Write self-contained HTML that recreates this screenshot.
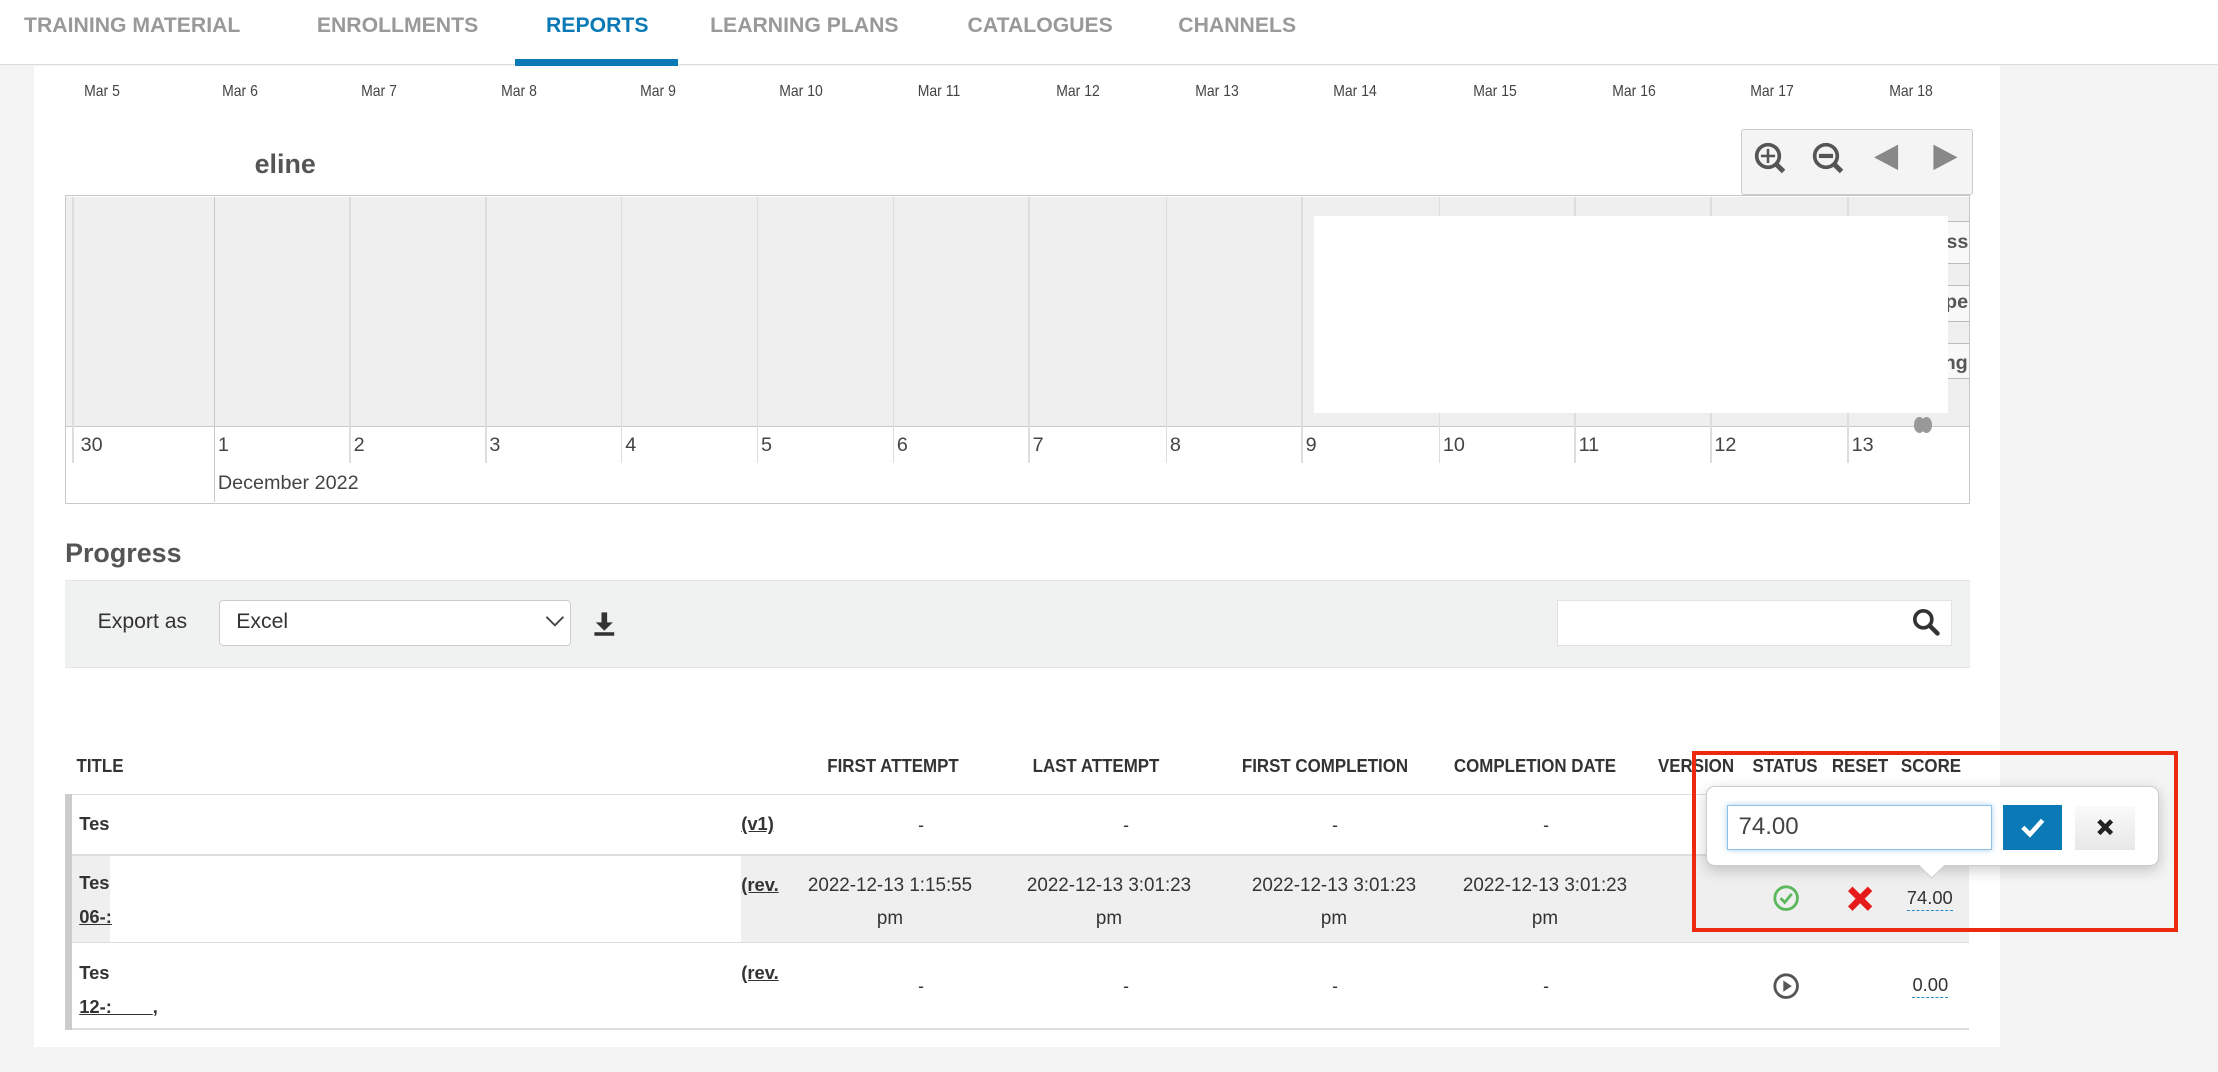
<!DOCTYPE html>
<html><head><meta charset="utf-8">
<style>
html,body{margin:0;padding:0;}
body{width:1568px;height:758px;zoom:1.41454;background:#f4f4f4;font-family:"Liberation Sans",sans-serif;color:#333;position:relative;overflow:hidden;}
.a{position:absolute;}
.nav{left:0;top:0;width:1568px;height:46px;background:#fff;border-bottom:1px solid #ddd;box-sizing:border-box;}
.tab{top:10px;font-size:15px;font-weight:bold;color:#999;letter-spacing:0;}
.mar{top:59px;font-size:11px;color:#444;transform:translateX(-50%) scaleX(0.9);}
.vl{width:1px;background:#ddd;}
.day{top:307px;font-size:14px;color:#444;}
.th{top:534px;font-size:13px;font-weight:bold;color:#333;transform:translateX(-50%) scaleX(0.92);white-space:nowrap;}
.td{font-size:13px;color:#333;text-align:center;transform:translateX(-50%) scaleX(0.95);white-space:nowrap;line-height:22px;}
.b{font-weight:bold;font-size:13px;}
u{text-decoration:underline;}
</style></head><body>
<div class="a nav"></div>
<div class="a tab" style="left:17px">TRAINING MATERIAL</div>
<div class="a tab" style="left:224px">ENROLLMENTS</div>
<div class="a tab" style="left:386px;color:#0a79b5">REPORTS</div>
<div class="a" style="left:364px;top:42px;width:115px;height:5px;background:#0a79b5"></div>
<div class="a tab" style="left:502px">LEARNING PLANS</div>
<div class="a tab" style="left:684px">CATALOGUES</div>
<div class="a tab" style="left:833px">CHANNELS</div>

<div class="a" style="left:24px;top:47px;width:1390px;height:693px;background:#fff"></div>

<div class="a mar" style="left:72px">Mar 5</div>
<div class="a mar" style="left:170px">Mar 6</div>
<div class="a mar" style="left:268px">Mar 7</div>
<div class="a mar" style="left:367px">Mar 8</div>
<div class="a mar" style="left:465px">Mar 9</div>
<div class="a mar" style="left:566px">Mar 10</div>
<div class="a mar" style="left:664px">Mar 11</div>
<div class="a mar" style="left:762px">Mar 12</div>
<div class="a mar" style="left:860px">Mar 13</div>
<div class="a mar" style="left:958px">Mar 14</div>
<div class="a mar" style="left:1057px">Mar 15</div>
<div class="a mar" style="left:1155px">Mar 16</div>
<div class="a mar" style="left:1253px">Mar 17</div>
<div class="a mar" style="left:1351px">Mar 18</div>

<div class="a" style="left:180px;top:105px;font-size:19px;font-weight:bold;color:#555">eline</div>

<div class="a" style="left:1231px;top:91px;width:164px;height:47px;background:#f4f4f4;border:1px solid #ccc;border-radius:2px;box-sizing:border-box"></div>
<svg class="a" style="left:1238px;top:98px" width="150" height="30" viewBox="0 0 150 30">
<g fill="none" stroke="#555" stroke-width="2.6"><circle cx="12" cy="12" r="8"/><line x1="18" y1="18" x2="23" y2="23" stroke-width="3.5"/>
<circle cx="53" cy="12" r="8"/><line x1="59" y1="18" x2="64" y2="23" stroke-width="3.5"/></g>
<g stroke="#555" stroke-width="1.8"><line x1="12" y1="7" x2="12" y2="17"/><line x1="7" y1="12" x2="17" y2="12"/><line x1="48" y1="12" x2="58" y2="12" stroke-width="3"/></g>
<polygon points="87,13 104,4 104,22" fill="#888"/>
<polygon points="146,13 129,4 129,22" fill="#888"/>
</svg>

<div class="a" style="left:46px;top:138px;width:1347px;height:218px;border:1px solid #c8c8c8;box-sizing:border-box;background:#fff"></div>
<div class="a" style="left:47px;top:139px;width:1345px;height:162px;background:#efefef;border-bottom:1px solid #c8c8c8"></div>
<div class="a vl" style="left:51px;top:139px;height:188px"></div>
<div class="a" style="left:151px;top:139px;width:1px;height:216px;background:#c8c8c8"></div>
<div class="a vl" style="left:247px;top:139px;height:188px"></div>
<div class="a vl" style="left:343px;top:139px;height:188px"></div>
<div class="a vl" style="left:439px;top:139px;height:188px"></div>
<div class="a vl" style="left:535px;top:139px;height:188px"></div>
<div class="a vl" style="left:631px;top:139px;height:188px"></div>
<div class="a vl" style="left:727px;top:139px;height:188px"></div>
<div class="a vl" style="left:824px;top:139px;height:188px"></div>
<div class="a vl" style="left:920px;top:139px;height:188px"></div>
<div class="a vl" style="left:1017px;top:139px;height:188px"></div>
<div class="a vl" style="left:1113px;top:139px;height:188px"></div>
<div class="a vl" style="left:1209px;top:139px;height:188px"></div>
<div class="a vl" style="left:1306px;top:139px;height:188px"></div>
<div class="a day" style="left:57px">30</div>
<div class="a day" style="left:154px">1</div>
<div class="a day" style="left:250px">2</div>
<div class="a day" style="left:346px">3</div>
<div class="a day" style="left:442px">4</div>
<div class="a day" style="left:538px">5</div>
<div class="a day" style="left:634px">6</div>
<div class="a day" style="left:730px">7</div>
<div class="a day" style="left:827px">8</div>
<div class="a day" style="left:923px">9</div>
<div class="a day" style="left:1020px">10</div>
<div class="a day" style="left:1116px">11</div>
<div class="a day" style="left:1212px">12</div>
<div class="a day" style="left:1309px">13</div>
<div class="a" style="left:154px;top:334px;font-size:14px;color:#444">December 2022</div>

<div class="a" style="left:1376px;top:156px;width:16px;height:90px;background:#f8f8f8;border-top:1px solid #bbb"></div>
<div class="a" style="left:1376px;top:186px;width:16px;height:15px;background:#efefef;border-top:1px solid #bbb;border-bottom:1px solid #bbb"></div>
<div class="a" style="left:1376px;top:227px;width:16px;height:15px;background:#efefef;border-top:1px solid #bbb;border-bottom:1px solid #bbb"></div>
<div class="a" style="left:1376px;top:243px;width:16px;height:24px;background:#f8f8f8;border-bottom:1px solid #bbb"></div>
<div class="a" style="left:1376px;top:163px;font-size:14px;font-weight:bold;color:#555">ss</div>
<div class="a" style="left:1375px;top:206px;font-size:14px;font-weight:bold;color:#555">pe</div>
<div class="a" style="left:1374px;top:249px;font-size:14px;font-weight:bold;color:#555">ng</div>
<div class="a" style="left:929px;top:153px;width:448px;height:139px;background:#fff"></div>
<div class="a" style="left:1353px;top:295px;width:8px;height:11px;border-radius:50%;background:#999"></div>
<div class="a" style="left:1358px;top:295px;width:8px;height:11px;border-radius:50%;background:#999"></div>

<div class="a" style="left:46px;top:380px;font-size:19px;font-weight:bold;color:#555">Progress</div>
<div class="a" style="left:46px;top:410px;width:1347px;height:62px;background:#f0f1f1;border-top:1px solid #e4e4e4;border-bottom:1px solid #e4e4e4;box-sizing:border-box"></div>
<div class="a" style="left:69px;top:431px;font-size:15px;color:#333">Export as</div>
<div class="a" style="left:155px;top:424px;width:249px;height:33px;background:#fff;border:1px solid #ccc;border-radius:3px;box-sizing:border-box"></div>
<div class="a" style="left:167px;top:431px;font-size:15px;color:#333">Excel</div>
<svg class="a" style="left:385px;top:434px" width="14" height="10"><polyline points="1,2 7,8 13,2" fill="none" stroke="#444" stroke-width="1.3"/></svg>
<svg class="a" style="left:419px;top:432px" width="16" height="18"><path d="M6 1h4v7h4l-6 6-6-6h4z" fill="#333"/><rect x="1" y="15" width="14" height="2.5" fill="#333"/></svg>
<div class="a" style="left:1101px;top:424px;width:279px;height:33px;background:#fff;border:1px solid #e2e2e2;box-sizing:border-box"></div>
<svg class="a" style="left:1352px;top:430px" width="20" height="20"><circle cx="8" cy="8" r="6" fill="none" stroke="#333" stroke-width="2.6"/><line x1="12.5" y1="12.5" x2="18" y2="18" stroke="#333" stroke-width="3.2" stroke-linecap="round"/></svg>

<div class="a th" style="left:71px">TITLE</div>
<div class="a th" style="left:631px">FIRST ATTEMPT</div>
<div class="a th" style="left:775px">LAST ATTEMPT</div>
<div class="a th" style="left:937px">FIRST COMPLETION</div>
<div class="a th" style="left:1085px">COMPLETION DATE</div>
<div class="a th" style="left:1199px">VERSION</div>
<div class="a th" style="left:1262px">STATUS</div>
<div class="a th" style="left:1315px">RESET</div>
<div class="a th" style="left:1365px">SCORE</div>

<div class="a" style="left:46px;top:561px;width:1346px;height:1px;background:#ddd"></div>
<div class="a" style="left:46px;top:561px;width:5px;height:167px;background:#ccc"></div>
<div class="a" style="left:51px;top:604px;width:27px;height:62px;background:#efefef"></div>
<div class="a" style="left:524px;top:604px;width:868px;height:62px;background:#efefef"></div>
<div class="a" style="left:51px;top:604px;width:1341px;height:1px;background:#ddd"></div>
<div class="a" style="left:51px;top:666px;width:1341px;height:1px;background:#ddd"></div>
<div class="a" style="left:51px;top:727px;width:1341px;height:1px;background:#ddd"></div>

<div class="a b" style="left:56px;top:575px">Tes</div>
<div class="a b" style="left:524px;top:575px"><u>(v1)</u></div>
<div class="a td" style="left:651px;top:572px">-</div>
<div class="a td" style="left:796px;top:572px">-</div>
<div class="a td" style="left:944px;top:572px">-</div>
<div class="a td" style="left:1093px;top:572px">-</div>

<div class="a b" style="left:56px;top:612px;line-height:24px">Tes<br><u>06-:</u></div>
<div class="a b" style="left:524px;top:618px"><u>(rev.</u></div>
<div class="a td" style="left:629px;top:614px;font-size:14px;line-height:24px">2022-12-13 1:15:55<br>pm</div>
<div class="a td" style="left:784px;top:614px;font-size:14px;line-height:24px">2022-12-13 3:01:23<br>pm</div>
<div class="a td" style="left:943px;top:614px;font-size:14px;line-height:24px">2022-12-13 3:01:23<br>pm</div>
<div class="a td" style="left:1092px;top:614px;font-size:14px;line-height:24px">2022-12-13 3:01:23<br>pm</div>
<svg class="a" style="left:1253px;top:625px" width="20" height="20"><circle cx="10" cy="10" r="8" fill="none" stroke="#5cb85c" stroke-width="2"/><polyline points="6,10 9,13 14,7" fill="none" stroke="#5cb85c" stroke-width="2"/></svg>
<svg class="a" style="left:1305px;top:626px" width="20" height="18"><path d="M3 2L17 16M17 2L3 16" stroke="#e61a1a" stroke-width="4.5"/></svg>
<div class="a" style="left:1348px;top:626px;font-size:13px;color:#333;border-bottom:1px dashed #2a8ac6;line-height:17px">74.00</div>

<div class="a b" style="left:56px;top:676px;line-height:24px">Tes<br><u>12-:&nbsp;&nbsp;&nbsp;&nbsp;&nbsp;&nbsp;&nbsp;&nbsp;</u>,</div>
<div class="a b" style="left:524px;top:680px"><u>(rev.</u></div>
<div class="a td" style="left:651px;top:686px">-</div>
<div class="a td" style="left:796px;top:686px">-</div>
<div class="a td" style="left:944px;top:686px">-</div>
<div class="a td" style="left:1093px;top:686px">-</div>
<svg class="a" style="left:1253px;top:687px" width="20" height="20"><circle cx="10" cy="10" r="8" fill="none" stroke="#555" stroke-width="2"/><polygon points="8,6 14,10 8,14" fill="#555"/></svg>
<div class="a" style="left:1352px;top:688px;font-size:13px;color:#333;border-bottom:1px dashed #2a8ac6;line-height:17px">0.00</div>

<div class="a" style="left:1206px;top:556px;width:320px;height:56px;background:#fff;border:1px solid #ccc;border-radius:6px;box-shadow:0 3px 10px rgba(0,0,0,.2);box-sizing:border-box"></div>
<div class="a" style="left:1359px;top:605px;width:13px;height:13px;background:#fff;transform:rotate(45deg);border-right:1px solid #ccc;border-bottom:1px solid #ccc"></div>
<div class="a" style="left:1221px;top:569px;width:187px;height:32px;border:1px solid #8fc0e8;box-shadow:0 0 4px #a8d0f0;box-sizing:border-box;background:#fff"></div>
<div class="a" style="left:1229px;top:575px;font-size:17px;color:#444">74.00</div>
<div class="a" style="left:1416px;top:569px;width:42px;height:32px;background:#0a79b5"></div>
<svg class="a" style="left:1428px;top:577px" width="18" height="16"><polyline points="2,8 7,13 16,3" fill="none" stroke="#fff" stroke-width="3.2"/></svg>
<div class="a" style="left:1467px;top:570px;width:42px;height:31px;background:linear-gradient(#fafafa,#e8e8e8)"></div>
<svg class="a" style="left:1482px;top:578px" width="13" height="13"><path d="M2 2L11 11M11 2L2 11" stroke="#222" stroke-width="3.2"/></svg>

<div class="a" style="left:1196px;top:531px;width:344px;height:128px;border:3px solid #ec2a10;box-sizing:border-box"></div>
</body></html>
